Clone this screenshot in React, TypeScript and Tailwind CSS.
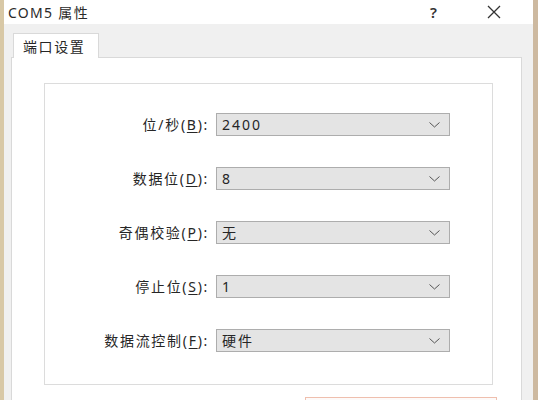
const font = { fontFamily: '"Noto Sans", "Noto Sans CJK SC", sans-serif' };

function Label({ text, hot, rest }: { text: string; hot: string; rest: string }) {
    return (
        <span className="w-[164px] shrink-0 text-right text-[14px] tracking-[1.7px] text-[#262626]">
            {text}(<span className="underline underline-offset-2">{hot}</span>){rest}
        </span>
    );
}

function Combo({ value }: { value: string }) {
    return (
        <div className="ml-[7px] flex h-[23px] w-[234px] items-center justify-between border border-[#adadad] bg-[#e4e4e4] pl-[5px] pr-[9px]">
            <span className="text-[14px] tracking-[2px] text-[#262626]">{value}</span>
            <svg width="11" height="6" viewBox="0 0 11 6" className="text-[#555]">
                <path d="M0.5 0.5 L5.5 5 L10.5 0.5" fill="none" stroke="currentColor" strokeWidth="1" />
            </svg>
        </div>
    );
}

export default function App() {
    const rows = [
        { text: "位/秒", hot: "B", value: "2400" },
        { text: "数据位", hot: "D", value: "8" },
        { text: "奇偶校验", hot: "P", value: "无" },
        { text: "停止位", hot: "S", value: "1" },
        { text: "数据流控制", hot: "F", value: "硬件" },
    ];

    return (
        <div className="flex h-[400px] w-[538px] overflow-hidden bg-[#f0f0f0]" style={font}>
            <div className="w-[4px] shrink-0 bg-[#d8c8a6]" />
            <div className="flex min-w-0 flex-1 flex-col">
                {/* title bar */}
                <div className="flex h-[24px] shrink-0 items-center bg-white">
                    <span className="ml-[4px] text-[14px] tracking-[1.3px] text-[#2a2a2a]">COM5 属性</span>
                    <span className="ml-auto mr-[50px] text-[15px] font-semibold text-[#333]">?</span>
                    <svg width="14" height="14" viewBox="0 0 14 14" className="mr-[32px] text-[#333]">
                        <path d="M1 1 L13 13 M13 1 L1 13" stroke="currentColor" strokeWidth="1.3" />
                    </svg>
                </div>

                <div className="flex flex-1 flex-col pl-[7px] pr-[11px] pt-[9px]">
                    {/* tab */}
                    <div className="relative z-10 -mb-px ml-[2px] flex h-[25px] w-[86px] items-center border border-b-0 border-[#d9d9d9] bg-white pl-[9px]">
                        <span className="text-[14px] tracking-[1.6px] text-[#262626]">端口设置</span>
                    </div>

                    {/* tab page */}
                    <div className="flex flex-1 flex-col border border-[#d9d9d9] bg-white">
                        <div className="ml-[32px] mr-[28px] mt-[25px] flex flex-col gap-[31px] border border-[#dcdcdc] pb-[32px] pt-[29px]">
                            {rows.map((r) => (
                                <div key={r.hot} className="flex items-center">
                                    <Label text={r.text} hot={r.hot} rest=":" />
                                    <Combo value={r.value} />
                                </div>
                            ))}
                        </div>
                        <div className="mr-[24px] mt-[12px] ml-auto h-[24px] w-[192px] border border-[#efbfae] bg-[#fdfaf9]" />
                    </div>
                </div>
            </div>
            <div className="w-[5px] shrink-0 bg-[#cdb9a0]" />
        </div>
    );
}
